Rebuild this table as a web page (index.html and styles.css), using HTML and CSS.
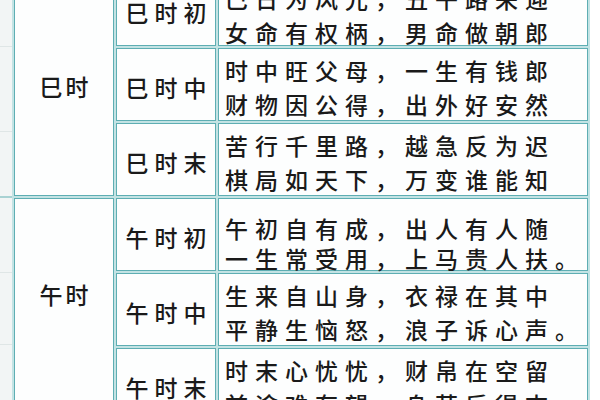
FILE: index.html
```html
<!DOCTYPE html>
<html lang="zh">
<head>
<meta charset="utf-8">
<title>时辰</title>
<link rel="stylesheet" href="styles.css">
</head>
<body>
<div class="page">
  <div class="gutter">
    <div class="gl h1"></div>
    <div class="gl h2"></div>
    <div class="gl h3 teal"></div>
    <div class="gl h4"></div>
    <div class="gl h5"></div>
  </div>
  <div class="grid">
    <div class="cell hour">巳时</div>
    <div class="cell sub">巳时初</div>
    <div class="cell verse first"><p>巳日为风光，丑午路来迎</p><p>女命有权柄，男命做朝郎</p></div>
    <div class="cell sub">巳时中</div>
    <div class="cell verse"><p>时中旺父母，一生有钱郎</p><p>财物因公得，出外好安然</p></div>
    <div class="cell sub">巳时末</div>
    <div class="cell verse"><p>苦行千里路，越急反为迟</p><p>棋局如天下，万变谁能知</p></div>
    <div class="cell hour low">午时</div>
    <div class="cell sub">午时初</div>
    <div class="cell verse tight"><p>午初自有成，出人有人随</p><p>一生常受用，上马贵人扶。</p></div>
    <div class="cell sub">午时中</div>
    <div class="cell verse"><p>生来自山身，衣禄在其中</p><p>平静生恼怒，浪子诉心声。</p></div>
    <div class="cell sub">午时末</div>
    <div class="cell verse"><p>时末心忧忧，财帛在空留</p><p>前途难有望，身劳后得志</p></div>
  </div>
</div>
</body>
</html>
```

FILE: styles.css
```css
html, body {
  margin: 0;
  padding: 0;
  background: #ffffff;
  overflow: hidden;
}

body {
  font-family: "Noto Sans CJK SC", "Noto Sans CJK TC", sans-serif;
  font-weight: 500;
  color: #1a1a1a;
}

.page {
  display: flex;
  height: 400px;
  overflow: hidden;
}

.gutter {
  width: 12px;
  flex: none;
  background: #f2f5f5;
  display: flex;
  flex-direction: column;
}

.gl {
  flex: none;
  border-bottom: 1px solid #dfe6e6;
}

.gl.teal {
  border-bottom: 2px solid #a9d2d3;
}

.h1 { height: 46px; }
.h2 { height: 84px; }
.h3 { height: 64px; }
.h4 { height: 74px; }
.h5 { height: 71px; }

.grid {
  align-self: flex-start;
  display: grid;
  grid-template-columns: 100px 100px 370px;
  grid-auto-rows: 73px;
  gap: 2px;
  padding: 2px;
  margin-top: -29px;
  background: #c3e3e4;
}

.cell {
  border: 1px solid #5eaeb3;
  background: #fdfefe;
  display: flex;
  align-items: center;
  justify-content: center;
  font-size: 23px;
  line-height: 1;
}

.hour {
  grid-row: span 3;
  letter-spacing: 3px;
  padding-left: 3px;
  padding-top: 4px;
}

.hour.low {
  padding-top: 0;
  padding-bottom: 30px;
}

.sub {
  letter-spacing: 6px;
  padding-left: 6px;
  padding-top: 6px;
}

.verse {
  flex-direction: column;
  align-items: flex-start;
  justify-content: center;
  padding: 5px 0 0 6px;
  letter-spacing: 7px;
  line-height: 34px;
}

.verse p {
  margin: 0;
  white-space: nowrap;
}

.verse.first {
  padding-top: 10px;
}

.verse.tight {
  justify-content: flex-start;
  padding-top: 14px;
  line-height: 30px;
}
```
